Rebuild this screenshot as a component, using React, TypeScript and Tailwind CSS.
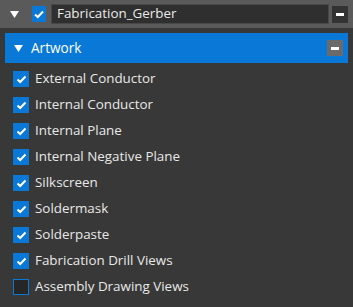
import React from "react";

const items: [string, boolean][] = [
  ["External Conductor", true],
  ["Internal Conductor", true],
  ["Internal Plane", true],
  ["Internal Negative Plane", true],
  ["Silkscreen", true],
  ["Soldermask", true],
  ["Solderpaste", true],
  ["Fabrication Drill Views", true],
  ["Assembly Drawing Views", false],
];

function Check({ on }: { on: boolean }) {
  if (!on)
    return <div className="w-[16px] h-[16px] bg-[#262626] border border-[#0a78d7] shrink-0" />;
  return (
    <div className="w-[16px] h-[16px] bg-[#0a78d7] shrink-0 flex items-center justify-center">
      <svg width="11" height="9" viewBox="0 0 11 9">
        <path d="M1.5 4.5 L4.2 7 L9.5 1.5" stroke="white" strokeWidth="2" fill="none" />
      </svg>
    </div>
  );
}

function Tri() {
  return (
    <svg width="9" height="7" viewBox="0 0 9 7">
      <path d="M0 0 H9 L4.5 7 Z" fill="white" />
    </svg>
  );
}

export default function App() {
  return (
    <div
      className="w-[353px] h-[307px] bg-[#383838] text-[#e8e8e8] overflow-hidden"
      style={{ fontFamily: '"Open Sans", "Noto Sans", sans-serif' }}
    >
      <div className="h-[28px] bg-[#5a5a5a] flex items-center pl-[10px] pr-[5px]">
        <Tri />
        <div className="ml-[13px] w-[14px] h-[16px] bg-[#0a78d7] flex items-center justify-center">
          <svg width="10" height="9" viewBox="0 0 10 9">
            <path d="M1 4.5 L3.8 7 L9 1.5" stroke="white" strokeWidth="2" fill="none" />
          </svg>
        </div>
        <div className="ml-[5px] w-[278px] h-[20px] bg-[#2f2f2f] border border-[#484848] flex items-center pl-[5px] text-[13.4px] text-[#eaeaea] leading-none">
          Fabrication_Gerber
        </div>
        <div className="ml-[3px] w-[16px] h-[17px] bg-[#333333] flex items-center justify-center">
          <div className="w-[8px] h-[3px] bg-white" />
        </div>
      </div>
      <div className="mx-[5px] mt-[5px] h-[30px] bg-[#0a78d7] flex items-center pl-[9px] pr-[5px]">
        <Tri />
        <span className="ml-[8px] text-[13.6px] text-white leading-none">Artwork</span>
        <div className="ml-auto w-[16px] h-[16px] bg-[#6a6a6a] flex items-center justify-center">
          <div className="w-[8px] h-[3px] bg-white" />
        </div>
      </div>
      <div className="flex flex-col pt-[3px]">
        {items.map(([label, on]) => (
          <div key={label} className="h-[26px] flex items-center pl-[13px]">
            <Check on={on} />
            <span className="ml-[6px] text-[13.4px] leading-none">{label}</span>
          </div>
        ))}
      </div>
    </div>
  );
}
